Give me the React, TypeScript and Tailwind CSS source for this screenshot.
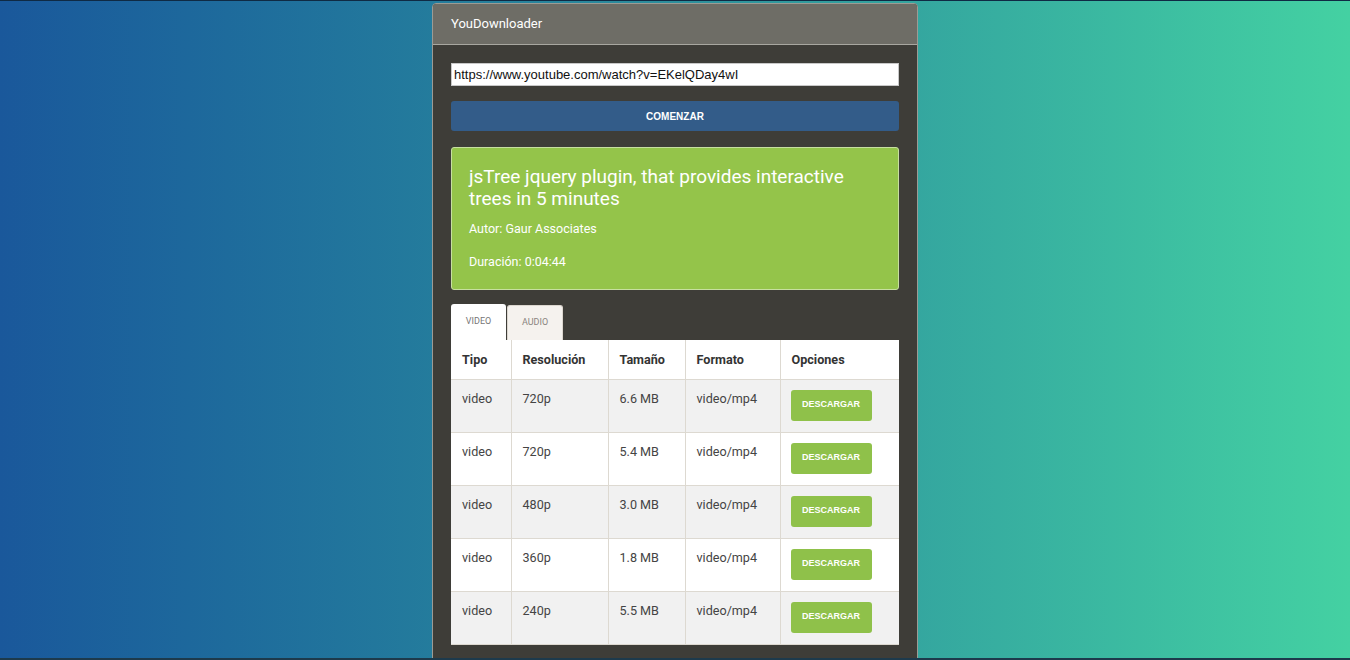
import React from "react";

const rows = [
  { tipo: "video", res: "720p", size: "6.6 MB", fmt: "video/mp4" },
  { tipo: "video", res: "720p", size: "5.4 MB", fmt: "video/mp4" },
  { tipo: "video", res: "480p", size: "3.0 MB", fmt: "video/mp4" },
  { tipo: "video", res: "360p", size: "1.8 MB", fmt: "video/mp4" },
  { tipo: "video", res: "240p", size: "5.5 MB", fmt: "video/mp4" },
];

export default function App() {
  return (
    <div className="w-[1350px] h-[660px] overflow-hidden bg-gradient-to-r from-[#1a589b] via-[#2d8f9c] to-[#44d1a2] border-t border-[#0f2a44] relative font-['Roboto',sans-serif]">
      <div className="flex justify-center pt-[2px]">
        <div className="w-[486px] h-[700px] border border-[#9c9b94] rounded-t-[4px] bg-[#3e3d38] overflow-hidden">
          <div className="h-[41px] bg-[#6e6d66] border-b border-[#a8a7a0] flex items-center px-[18px] text-[13px] text-white">
            YouDownloader
          </div>
          <div className="px-[18px] pt-[18px]">
            <div className="h-[23px] bg-white border border-[#c8c8c8] flex items-center px-[2px] text-[13px] text-[#111] font-['Liberation_Sans',sans-serif]">
              https://www.youtube.com/watch?v=EKelQDay4wI
            </div>
            <button className="mt-[15px] w-full h-[30px] bg-[#335c89] rounded-[3px] text-white text-[10px] font-bold font-['Liberation_Sans',sans-serif]">
              COMENZAR
            </button>
            <div className="mt-[16px] h-[143px] bg-[#94c44a] border border-[#c7dfa0] rounded-[3px] px-[17px] pt-[18px] text-white">
              <div className="text-[19px] leading-[22px] w-[390px]">
                jsTree jquery plugin, that provides interactive trees in 5 minutes
              </div>
              <div className="text-[12.5px] mt-[10px]">Autor: Gaur Associates</div>
              <div className="text-[12.5px] mt-[14px]">Duración: 0:04:44</div>
            </div>
            <div className="mt-[14px] flex items-end h-[36px]">
              <div className="w-[55px] h-[36px] bg-white rounded-t-[3px] flex items-center justify-center text-[9px] text-[#777]">
                VIDEO
              </div>
              <div className="ml-[1px] w-[56px] h-[35px] bg-[#f5f2ee] border border-[#dcd7cf] border-b-0 rounded-t-[3px] flex items-center justify-center text-[9px] text-[#8a8580]">
                AUDIO
              </div>
            </div>
            <table className="w-[448px] border-collapse bg-white text-[12.6px] text-[#444] table-fixed">
              <colgroup>
                <col className="w-[60px]" />
                <col className="w-[97px]" />
                <col className="w-[77px]" />
                <col className="w-[95px]" />
                <col className="w-[119px]" />
              </colgroup>
              <thead>
                <tr className="h-[39px]">
                  {["Tipo", "Resolución", "Tamaño", "Formato", "Opciones"].map((h, i) => (
                    <th
                      key={h}
                      className={`text-left font-bold text-[#333] px-[11px] pt-[2px] border-[#ddd9d1] border-b ${i > 0 ? "border-l" : ""}`}
                    >
                      {h}
                    </th>
                  ))}
                </tr>
              </thead>
              <tbody>
                {rows.map((r, idx) => (
                  <tr key={idx} className={`h-[53px] ${idx % 2 === 0 ? "bg-[#f1f1f1]" : "bg-white"}`}>
                    <td className="align-top px-[11px] pt-[10px] border-b border-[#ddd9d1]">{r.tipo}</td>
                    <td className="align-top px-[11px] pt-[10px] border-b border-l border-[#ddd9d1]">{r.res}</td>
                    <td className="align-top px-[11px] pt-[10px] border-b border-l border-[#ddd9d1]">{r.size}</td>
                    <td className="align-top px-[11px] pt-[10px] border-b border-l border-[#ddd9d1]">{r.fmt}</td>
                    <td className="align-top px-[10px] pt-[10px] border-b border-l border-[#ddd9d1]">
                      <button className="w-[81px] h-[31px] bg-[#8fc14a] rounded-[3px] text-white text-[9px] font-bold font-['Liberation_Sans',sans-serif]">
                        DESCARGAR
                      </button>
                    </td>
                  </tr>
                ))}
              </tbody>
            </table>
          </div>
        </div>
      </div>
      <div className="absolute left-0 bottom-0 w-full h-[2px] bg-[#1d3a4c]" />
    </div>
  );
}
